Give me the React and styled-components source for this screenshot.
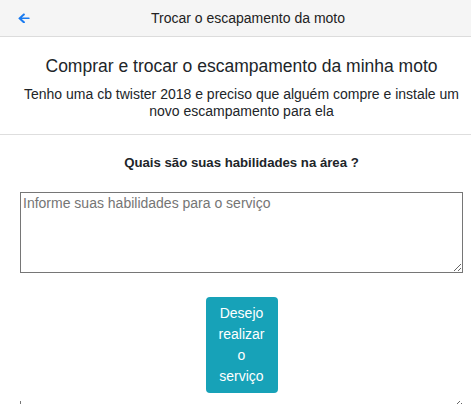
import React from 'react';
import styled, { createGlobalStyle } from 'styled-components';

const GlobalStyle = createGlobalStyle`
  html, body {
    margin: 0;
    padding: 0;
    background: #fff;
    font-family: "Liberation Sans", Arial, sans-serif;
    color: #212529;
  }
`;

const Page = styled.div`
  width: 471px;
  height: 404px;
  overflow: hidden;
`;

const Header = styled.header`
  height: 36px;
  display: flex;
  align-items: center;
  padding: 0 5px 0 18px;
  background: #f5f5f5;
  border-bottom: 1px solid #dcdcdc;
`;

const BackButton = styled.button`
  border: 0;
  background: none;
  padding: 0;
  width: 12px;
  height: 10px;
  display: flex;
  cursor: pointer;
`;

const HeaderTitle = styled.span`
  flex: 1;
  text-align: center;
  font-size: 14px;
  color: #222;
`;

const Intro = styled.section`
  padding: 19px 8px 14px 20px;
  border-bottom: 1px solid #dedede;
  text-align: center;
`;

const Title = styled.h1`
  margin: 0 0 9px;
  font-size: 17.5px;
  font-weight: 400;
  line-height: 21px;
  color: #212529;
`;

const Description = styled.p`
  margin: 0;
  font-size: 14px;
  line-height: 17px;
  color: #212529;
`;

const Form = styled.form`
  padding: 20px 8px 0 20px;
  display: flex;
  flex-direction: column;
  align-items: center;
`;

const Label = styled.label`
  font-size: 13.2px;
  font-weight: 700;
  line-height: 16px;
  margin-bottom: 21px;
`;

const Skills = styled.textarea`
  box-sizing: border-box;
  align-self: stretch;
  height: 81px;
  margin: 0 0 24px;
  padding: 2px;
  border: 1px solid #767676;
  font-family: "Liberation Sans", Arial, sans-serif;
  font-size: 14px;
  line-height: 17px;
  color: #212529;
  &::placeholder {
    color: #757575;
  }
`;

const Submit = styled.button`
  width: 72px;
  padding: 6px 10px;
  border: 0;
  border-radius: 4px;
  background: #17a2b8;
  color: #fff;
  font-family: "Liberation Sans", Arial, sans-serif;
  font-size: 14px;
  line-height: 21px;
  text-align: center;
  cursor: pointer;
`;

const Extra = styled.textarea`
  box-sizing: border-box;
  align-self: stretch;
  height: 6px;
  margin: 8px 0 0;
  padding: 0;
  border: 0;
  border-left: 1px solid #767676;
  outline: none;
`;

const ArrowLeft = () => (
  <svg width="12" height="10" viewBox="0 0 448 400" fill="#1a7bf0">
    <path d="M257 389l-22 22c-9 9-25 9-34 0L7 234c-9-9-9-25 0-34L201 23c9-9 25-9 34 0l22 22c10 10 9 25 0 35L137 176h287c13 0 24 11 24 24v16c0 13-11 24-24 24H137l120 114c10 10 10 25 0 35z" />
  </svg>
);

export default function App() {
  return (
    <Page>
      <GlobalStyle />
      <Header>
        <BackButton aria-label="Voltar">
          <ArrowLeft />
        </BackButton>
        <HeaderTitle>Trocar o escapamento da moto</HeaderTitle>
      </Header>
      <Intro>
        <Title>Comprar e trocar o escampamento da minha moto</Title>
        <Description>
          Tenho uma cb twister 2018 e preciso que alguém compre e instale um novo escampamento para ela
        </Description>
      </Intro>
      <Form onSubmit={(e) => e.preventDefault()}>
        <Label htmlFor="skills">Quais são suas habilidades na área ?</Label>
        <Skills id="skills" placeholder="Informe suas habilidades para o serviço" />
        <Submit type="submit">Desejo realizar o serviço</Submit>
        <Extra aria-hidden="true" />
      </Form>
    </Page>
  );
}
